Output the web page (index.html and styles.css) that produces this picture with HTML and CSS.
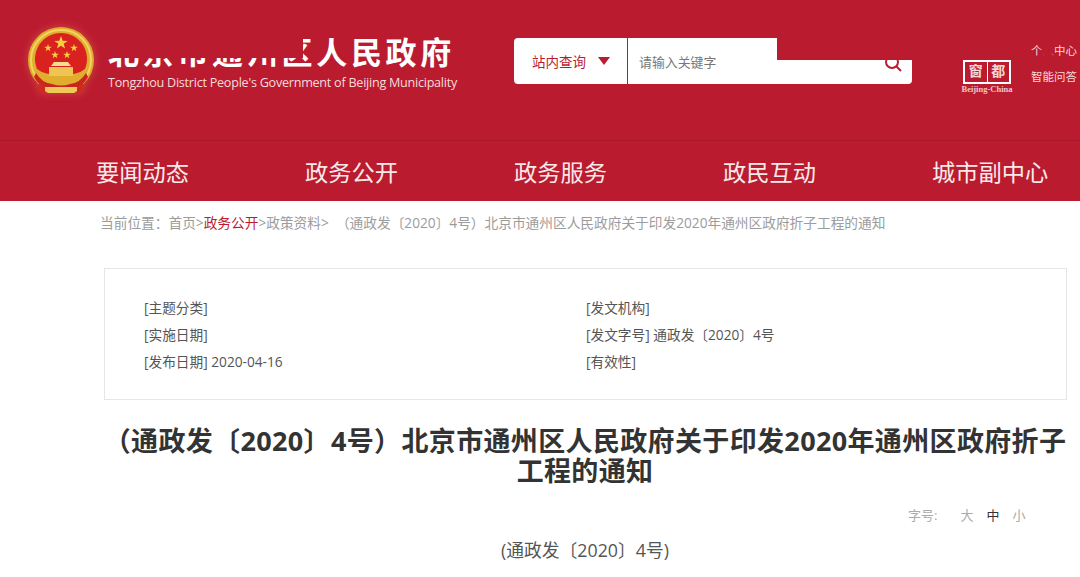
FILE: index.html
```html
<!DOCTYPE html>
<html lang="zh-CN">

<head>
    <meta charset="UTF-8">
    <title>通州区人民政府</title>
    <link rel="stylesheet" href="styles.css">
</head>

<body>
    <div class="header">
        <svg class="emblem" viewBox="0 0 66 70" width="66" height="70">
            <defs>
                <polygon id="star" points="0,-5 1.200,-1.600 4.800,-1.500 1.900,0.600 2.900,4 0,2 -2.900,4 -1.900,0.600 -4.800,-1.500 -1.200,-1.600" fill="#f4cf3f" />
            </defs>
            <circle cx="33" cy="33" r="33" fill="#e0ae2c" />
            <circle cx="33" cy="33" r="30" fill="none" stroke="#f3d264" stroke-width="2" />
            <path d="M9 42A26 26 0 1 1 57 42Q50 48 33 48Q16 48 9 42z" fill="#d9221f" />
            <use href="#star" transform="translate(33 16) scale(1.400)" />
            <use href="#star" transform="translate(20 21) scale(.8)" />
            <use href="#star" transform="translate(46 21) scale(.8)" />
            <use href="#star" transform="translate(27 28) scale(.8)" />
            <use href="#star" transform="translate(39 28) scale(.8)" />
            <path d="M26 35h14l3 4h-20z" fill="#f6dc8c" />
            <path d="M21 40h24v9H21z" fill="#eec552" />
            <path d="M8 46Q14 56 24 57Q33 60 42 57Q52 56 58 46L60 50Q54 62 42 62H24Q12 62 6 50z" fill="#c9261f" />
            <path d="M17 60h32v4l-3 2H20l-3-2z" fill="#efc95a" />
            <path d="M11 56l6 3v8l-7-3zM55 56l-6 3v8l7-3z" fill="#cf2a1e" />
        </svg>
        <div class="brand">
            <div class="brand-cn">北京市通州区人民政府</div>
            <div class="brand-en">Tongzhou District People's Government of Beijing Municipality</div>
        </div>
        <div class="search">
            <div class="search-type">站内查询<span class="arrow"></span></div>
            <div class="search-input">请输入关键字</div>
            <svg class="search-icon" viewBox="0 0 18 18" width="18" height="18">
                <circle cx="8" cy="8" r="6" fill="none" stroke="#bb1b2f" stroke-width="2" />
                <path d="M12.500 12.500L17 17" stroke="#bb1b2f" stroke-width="2" />
            </svg>
        </div>
        <div class="capital">
            <div class="capital-box"><span>窗</span><span>都</span></div>
            <div class="capital-en">Beijing-China</div>
        </div>
        <div class="user-links">
            <div>个人中心</div>
            <div>智能问答</div>
        </div>
        <div class="mask-title"></div>
        <div class="mask-search"></div>
        <div class="mask-user"></div>
    </div>

    <ul class="nav">
        <li>要闻动态</li>
        <li>政务公开</li>
        <li>政务服务</li>
        <li>政民互动</li>
        <li>城市副中心</li>
    </ul>

    <div class="crumb">当前位置：首页&gt;<span class="on">政务公开</span>&gt;政策资料&gt;&nbsp;&nbsp;（通政发〔2020〕4号）北京市通州区人民政府关于印发2020年通州区政府折子工程的通知</div>

    <div class="info">
        <div>[主题分类]</div>
        <div>[发文机构]</div>
        <div>[实施日期]</div>
        <div>[发文字号] 通政发〔2020〕4号</div>
        <div>[发布日期] 2020-04-16</div>
        <div>[有效性]</div>
    </div>

    <h1 class="title">（通政发〔2020〕4号）北京市通州区人民政府关于印发2020年通州区政府折子工程的通知</h1>

    <div class="size">
        <span class="size-label">字号:</span>
        <span>大</span>
        <span class="on">中</span>
        <span>小</span>
    </div>

    <p class="doc-no">(通政发〔2020〕4号)</p>
</body>

</html>
```

FILE: styles.css
```css
* {
    margin: 0;
    padding: 0;
    box-sizing: border-box;
}

body {
    font-family: "Open Sans", "Noto Sans CJK SC", sans-serif;
    background: #fff;
    color: #444;
}

.header {
    position: relative;
    display: flex;
    height: 140px;
    padding: 27px 0 0 28px;
    background: #bb1b2f;
}

.emblem {
    flex: none;
    width: 66px;
    height: 70px;
    filter: drop-shadow(0 0 4px rgba(255, 190, 120, 0.3));
}

.brand {
    flex: none;
    width: 406px;
    margin-left: 14px;
    color: #fff;
}

.brand-cn {
    margin-top: 6px;
    font-size: 31px;
    line-height: 38px;
    font-weight: bold;
    letter-spacing: 3.700px;
    white-space: nowrap;
}

.brand-en {
    margin-top: 3px;
    font-size: 12.600px;
    line-height: 18px;
    letter-spacing: -0.250px;
    color: #f6dcdc;
    white-space: nowrap;
}

.search {
    flex: none;
    display: flex;
    position: relative;
    align-items: center;
    width: 398px;
    height: 46px;
    margin-top: 11px;
    background: #fff;
    border-radius: 4px;
}

.search-type {
    display: flex;
    align-items: center;
    width: 114px;
    height: 100%;
    padding-left: 18px;
    font-size: 13.500px;
    color: #bb1b2f;
    border-right: 1px solid #bb1b2f;
}

.arrow {
    width: 0;
    height: 0;
    margin-left: 12px;
    border: 6px solid transparent;
    border-top: 8px solid #bb1b2f;
    border-bottom: 0;
}

.search-input {
    padding-left: 11px;
    font-size: 12.900px;
    color: #777;
}

.search-icon {
    position: absolute;
    top: 16px;
    right: 10px;
}

.capital {
    flex: none;
    width: 52px;
    margin: 33px 0 0 49px;
    text-align: center;
    color: #fff;
}

.capital-box {
    display: flex;
    width: 48px;
    height: 24px;
    margin-left: 2px;
    border: 2px solid #fff;
    font-family: "Liberation Serif", "Noto Sans CJK SC", serif;
    font-size: 14px;
    line-height: 19px;
    font-weight: bold;
    color: #f4d7d7;
}

.capital-box span {
    flex: 1;
}

.capital-box span:first-child {
    border-right: 1px solid #fff;
}

.capital-en {
    font-family: "Liberation Serif", serif;
    font-size: 8.500px;
    line-height: 10px;
    font-weight: bold;
    white-space: nowrap;
    color: #f0c8c8;
}

.user-links {
    flex: none;
    margin: 11px 0 0 18px;
    font-size: 11.500px;
    line-height: 26px;
    color: #f6dcdc;
    white-space: nowrap;
}

.mask-title {
    position: absolute;
    top: 24px;
    left: 100px;
    width: 203px;
    height: 34px;
    background: #bb1b2f;
}

.mask-search {
    position: absolute;
    top: 30px;
    left: 777px;
    width: 140px;
    height: 30px;
    background: #bb1b2f;
}

.mask-user {
    position: absolute;
    top: 43px;
    left: 1042px;
    width: 11px;
    height: 16px;
    background: #bb1b2f;
    filter: blur(1.500px);
}

.nav {
    display: flex;
    gap: 116px;
    height: 61px;
    padding-left: 96px;
    background: #bb1b2f;
    border-top: 1px solid #a81a2b;
    list-style: none;
    font-size: 23.250px;
    line-height: 63px;
    color: #f9e9e9;
    white-space: nowrap;
}

.crumb {
    padding: 13px 0 0 100px;
    font-size: 13.700px;
    line-height: 18px;
    color: #9c9c9c;
    white-space: nowrap;
}

.crumb .on {
    color: #bb1b2f;
}

.info {
    display: grid;
    grid-template-columns: 442px 1fr;
    grid-auto-rows: 27px;
    align-items: center;
    width: 963px;
    height: 132px;
    margin: 36px 0 0 104px;
    padding: 24px 0 0 39px;
    border: 1px solid #e6e6e6;
    font-size: 13.700px;
    color: #555;
}

.title {
    width: 964px;
    margin: 26px 0 0 103px;
    font-size: 27px;
    line-height: 30px;
    font-weight: bold;
    letter-spacing: 0.350px;
    text-align: center;
    color: #333;
}

.size {
    display: flex;
    gap: 13px;
    margin: 20px 0 0 908px;
    font-size: 13px;
    line-height: 18px;
    color: #aaa;
}

.size-label {
    margin-right: 10px;
}

.size .on {
    color: #333;
}

.doc-no {
    width: 964px;
    margin: 13px 0 0 103px;
    font-size: 17.800px;
    line-height: 26px;
    text-align: center;
    color: #555;
}
```
